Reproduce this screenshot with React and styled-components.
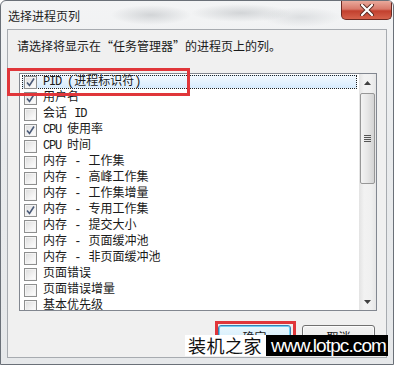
import React from "react";
import styled, { createGlobalStyle } from "styled-components";

const Global = createGlobalStyle`
  html, body { margin: 0; padding: 0; background: #ffffff; }
  body { width: 394px; height: 365px; overflow: hidden; }
  * { box-sizing: border-box; }
`;

const FONT = `"Liberation Mono", "Noto Sans CJK SC", monospace`;

const Window = styled.div`
  position: relative;
  width: 394px;
  height: 365px;
  display: flex;
  flex-direction: column;
  border: 1px solid #6a7078;
  border-radius: 6px 6px 0 0;
  background:
    radial-gradient(ellipse 40px 10px at 150px 14px, rgba(150,155,160,0.35), transparent),
    radial-gradient(ellipse 50px 9px at 240px 12px, rgba(150,155,160,0.35), transparent),
    radial-gradient(ellipse 40px 10px at 300px 16px, rgba(170,175,180,0.3), transparent),
    linear-gradient(#f3f4f5, #e9ebed 40%, #e6e8ea);
  font-family: ${FONT};
  font-size: 12px;
  color: #1a1a1a;
  overflow: hidden;
`;

const TitleBar = styled.div`
  height: 28px;
  display: flex;
  align-items: flex-start;
  justify-content: space-between;
  padding-left: 7px;
`;

const Title = styled.div`
  margin-top: 8px;
  font-family: "Noto Sans CJK SC", sans-serif;
  font-size: 12px;
  line-height: 14px;
  color: #1e1e1e;
`;

const CloseButton = styled.div`
  width: 51px;
  height: 19px;
  margin-right: 1px;
  border: 1px solid #6b2a22;
  border-top: none;
  border-radius: 0 0 5px 5px;
  background: linear-gradient(#e9a99b, #d8796a 45%, #c2402e 55%, #d6624c);
  display: flex;
  align-items: center;
  justify-content: center;
`;

const Client = styled.div`
  flex: 1;
  margin: 0 6px 6px 6px;
  border: 1px solid #a7abb0;
  background: #f0f0f0;
  display: flex;
  flex-direction: column;
  padding: 9px 9px 0 9px;
`;

const Label = styled.div`
  font-family: "Noto Sans CJK SC", sans-serif;
  line-height: 14px;
  height: 14px;
  margin-bottom: 20px;
`;

const ListBox = styled.div`
  margin-left: 2px;
  width: 358px;
  height: 238px;
  border: 1px solid #828790;
  background: #ffffff;
  display: flex;
  overflow: hidden;
`;

const Rows = styled.div`
  flex: 1;
  display: flex;
  flex-direction: column;
`;

const Row = styled.div`
  flex: 0 0 16px;
  height: 16px;
  display: flex;
  align-items: center;
  position: relative;
  padding-left: 4px;
  ${(p) =>
    p.$selected &&
    `
    &::before {
      content: "";
      position: absolute;
      left: 2px; right: 2px; top: 1px; bottom: 1px;
      border: 1px dotted #222;
      background: linear-gradient(#f1f8fe, #d7ebfd);
    }
  `}
`;

const Box = styled.span`
  position: relative;
  width: 13px;
  height: 13px;
  border: 1px solid #8e8f8f;
  background: linear-gradient(135deg, #dcdcdc, #f6f6f6 70%, #ffffff);
  box-shadow: inset 0 0 0 1px #f4f4f4;
  margin-right: 6px;
  display: flex;
  align-items: center;
  justify-content: center;
`;

const Text = styled.span`
  position: relative;
  line-height: 14px;
  white-space: nowrap;
  font-size: 12px;
`;

const Latin = styled.span`
  font-family: "Liberation Mono", monospace;
  font-size: 12px;
  letter-spacing: -1.2px;
`;

const ScrollBar = styled.div`
  width: 17px;
  display: flex;
  flex-direction: column;
  background: linear-gradient(90deg, #e3e3e3, #f2f2f2 30%, #f0f0f0 70%, #e6e6e6);
`;

const Arrow = styled.div`
  height: 17px;
  display: flex;
  align-items: center;
  justify-content: center;
`;

const Track = styled.div`
  flex: 1;
  display: flex;
  flex-direction: column;
  padding-top: 2px;
`;

const Thumb = styled.div`
  margin: 0 1px;
  height: 91px;
  border: 1px solid #979797;
  border-radius: 2px;
  background: linear-gradient(90deg, #f3f3f3, #e6e6e6 50%, #d4d4d4);
  display: flex;
  align-items: center;
  justify-content: center;
`;

const ButtonRow = styled.div`
  display: flex;
  justify-content: flex-end;
  gap: 11px;
  margin-top: 14px;
  padding-right: 2px;
`;

const Button = styled.div`
  width: 73px;
  height: 23px;
  border: 1px solid ${(p) => (p.$default ? "#3c7fb1" : "#707070")};
  border-radius: 3px;
  background: ${(p) =>
    p.$default
      ? "linear-gradient(#eaf6fd, #d9f0fc 50%, #bee6fd 51%, #a7d9f5)"
      : "linear-gradient(#f2f2f2, #ebebeb 50%, #dddddd 51%, #cfcfcf)"};
  box-shadow: inset 0 0 0 1px ${(p) => (p.$default ? "#6fd0f5" : "#fcfcfc")};
  display: flex;
  align-items: center;
  justify-content: center;
  font-family: "Noto Sans CJK SC", sans-serif;
  font-size: 12px;
`;

const RedMark = styled.div`
  position: absolute;
  left: ${(p) => p.$x}px;
  top: ${(p) => p.$y}px;
  width: ${(p) => p.$w}px;
  height: ${(p) => p.$h}px;
  border: 3px solid #e0363a;
`;

const Watermark = styled.div`
  position: absolute;
  left: 184px;
  top: 334px;
  height: 21px;
  display: flex;
`;

const WmLeft = styled.div`
  width: 81px;
  background: #ffffff;
  color: #111;
  font-family: "Noto Sans CJK SC", sans-serif;
  font-size: 18px;
  line-height: 21px;
  letter-spacing: 0.5px;
  padding-left: 3px;
  white-space: nowrap;
  overflow: hidden;
`;

const WmRight = styled.div`
  width: 122px;
  background: #000000;
  color: #ffffff;
  font-family: "Liberation Sans", sans-serif;
  font-size: 19px;
  line-height: 21px;
  letter-spacing: -0.9px;
  padding-left: 5px;
  white-space: nowrap;
  overflow: hidden;
`;

const items = [
  { t: [["l", "PID "], ["c", "(进程标识符)"]], c: true, s: true },
  { t: [["c", "用户名"]], c: true },
  { t: [["c", "会话 "], ["l", "ID"]], c: false },
  { t: [["l", "CPU "], ["c", "使用率"]], c: true },
  { t: [["l", "CPU "], ["c", "时间"]], c: false },
  { t: [["c", "内存 - 工作集"]], c: false },
  { t: [["c", "内存 - 高峰工作集"]], c: false },
  { t: [["c", "内存 - 工作集增量"]], c: false },
  { t: [["c", "内存 - 专用工作集"]], c: true },
  { t: [["c", "内存 - 提交大小"]], c: false },
  { t: [["c", "内存 - 页面缓冲池"]], c: false },
  { t: [["c", "内存 - 非页面缓冲池"]], c: false },
  { t: [["c", "页面错误"]], c: false },
  { t: [["c", "页面错误增量"]], c: false },
  { t: [["c", "基本优先级"]], c: false },
];

const Check = () => (
  <svg width="11" height="11" viewBox="0 0 11 11">
    <path d="M2 5.5 L4.5 8.5 L9 1.5" fill="none" stroke="#4a5a78" strokeWidth="1.6" />
  </svg>
);

export default function App() {
  return (
    <>
      <Global />
      <Window>
        <TitleBar>
          <Title>选择进程页列</Title>
          <CloseButton>
            <svg width="16" height="12" viewBox="0 0 16 12">
              <path d="M3 1 L13 11 M13 1 L3 11" stroke="#5a2a22" strokeWidth="4" strokeLinecap="round" />
              <path d="M3 1 L13 11 M13 1 L3 11" stroke="#ffffff" strokeWidth="2.2" strokeLinecap="round" />
            </svg>
          </CloseButton>
        </TitleBar>
        <Client>
          <Label>请选择将显示在“任务管理器”的进程页上的列。</Label>
          <ListBox>
            <Rows>
              {items.map((it, i) => (
                <Row key={i} $selected={it.s}>
                  <Box>{it.c && <Check />}</Box>
                  <Text>
                    {it.t.map(([k, s], j) =>
                      k === "l" ? <Latin key={j}>{s}</Latin> : <span key={j}>{s}</span>
                    )}
                  </Text>
                </Row>
              ))}
            </Rows>
            <ScrollBar>
              <Arrow>
                <svg width="7" height="4" viewBox="0 0 7 4"><path d="M0 4 L3.5 0 L7 4 Z" fill="#404040" /></svg>
              </Arrow>
              <Track>
                <Thumb>
                  <svg width="7" height="8" viewBox="0 0 7 8">
                    <path d="M0 0.5 H7 M0 2.5 H7 M0 4.5 H7 M0 6.5 H7" stroke="#555" strokeWidth="1" />
                  </svg>
                </Thumb>
              </Track>
              <Arrow>
                <svg width="7" height="4" viewBox="0 0 7 4"><path d="M0 0 L3.5 4 L7 0 Z" fill="#404040" /></svg>
              </Arrow>
            </ScrollBar>
          </ListBox>
          <ButtonRow>
            <Button $default>确定</Button>
            <Button>取消</Button>
          </ButtonRow>
        </Client>
        <RedMark $x={6} $y={67} $w={183} $h={28} />
        <RedMark $x={214} $y={320} $w={81} $h={34} />
        <Watermark>
          <WmLeft>装机之家</WmLeft>
          <WmRight>www.lotpc.com</WmRight>
        </Watermark>
      </Window>
    </>
  );
}
